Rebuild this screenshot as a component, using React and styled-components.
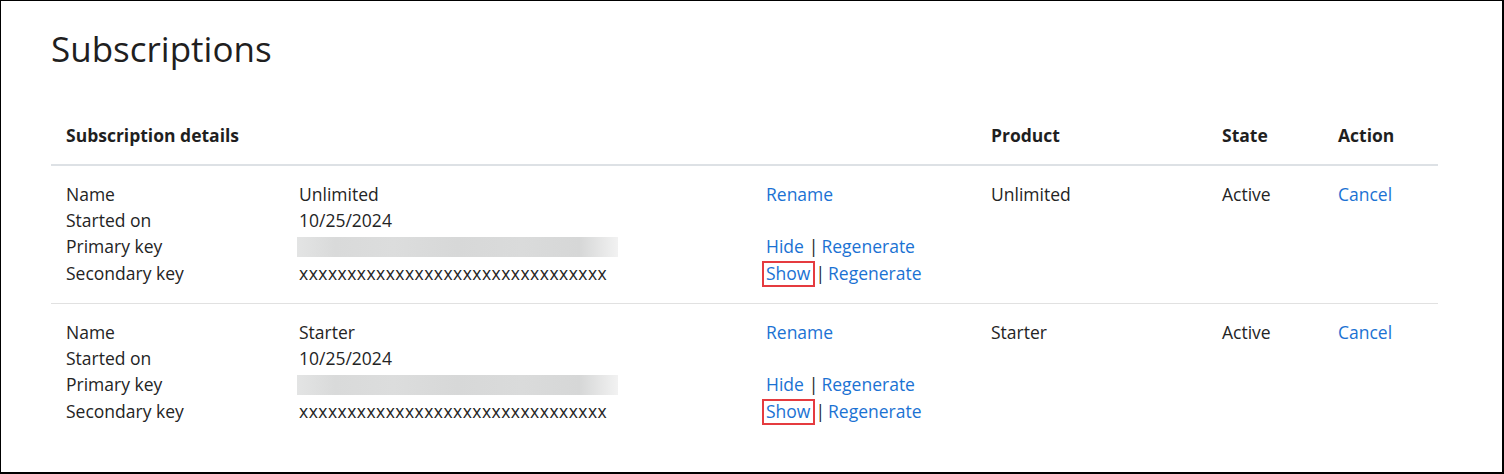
import React from "react";
import styled, { createGlobalStyle } from "styled-components";

const Global = createGlobalStyle`
  html, body { margin: 0; padding: 0; background: #fff; }
  body { font-family: "Open Sans", "Noto Sans", sans-serif; color: #242424; }
  * { box-sizing: border-box; }
`;

const Frame = styled.div`
  width: 1504px;
  height: 474px;
  border-left: 1px solid #000;
  border-top: 1px solid #000;
  border-right: 2px solid #000;
  border-bottom: 2px solid #000;
  padding: 20px 64px 0 50px;
  background: #fff;
`;

const Title = styled.h1`
  margin: 0;
  font-size: 35px;
  font-weight: 400;
  line-height: 56px;
  color: #1f1f1f;
`;

const Table = styled.div`
  margin-top: 29px;
  width: 1387px;
`;

const Row = styled.div`
  display: grid;
  grid-template-columns: 925px 231px 116px 115px;
  border-bottom: ${(p) => (p.$head ? "2px solid #dde1e5" : p.$last ? "none" : "1px solid #e1e1e1")};
  padding: ${(p) => (p.$head ? "16px 0 16px" : "15px 0 17px")};
`;

const HeadCell = styled.div`
  padding-left: 15px;
  font-size: 17.5px;
  font-weight: 700;
  line-height: 26px;
  color: #1f1f1f;
`;

const Cell = styled.div`
  padding-left: 15px;
  font-size: 17.5px;
  line-height: 26px;
`;

const Details = styled.div`
  padding-left: 15px;
  display: grid;
  grid-template-columns: 233px 467px 1fr;
  font-size: 17.5px;
  line-height: 26px;
`;

const Line = styled.div`
  height: ${(p) => (p.$tall ? "27px" : "26px")};
  padding-bottom: ${(p) => (p.$tall && !p.$top ? "1px" : "0")};
  white-space: nowrap;
  display: flex;
  align-items: ${(p) => (p.$top ? "flex-start" : "center")};
`;

const Link = styled.a`
  color: #1b72d3;
  text-decoration: none;
  cursor: pointer;
`;

const Pipe = styled.span`
  color: #242424;
  margin: ${(p) => (p.$wide ? "0 3px 0 5px" : "0 3px 0 5px")};
`;

const Boxed = styled.span`
  position: relative;
  margin-right: ${(p) => (p.$gap ? "0" : "0")};
  &::after {
    content: "";
    position: absolute;
    left: -4px;
    right: -5px;
    top: 1px;
    bottom: -1px;
    border: 2px solid #e53b3f;
  }
`;

const Masked = styled.div`
  width: 321px;
  height: 20px;
  margin-left: -2px;
  margin-top: 4px;
  background: linear-gradient(
    90deg,
    #e3e4e4 0%,
    #d9dada 12%,
    #dcdddd 30%,
    #d7d8d8 50%,
    #dadbdb 70%,
    #d6d7d7 88%,
    #f2f2f2 100%
  );
  filter: blur(0.6px);
`;

const Hidden = styled.span`
  letter-spacing: 0.47px;
`;

const subs = [
  { name: "Unlimited", date: "10/25/2024" },
  { name: "Starter", date: "10/25/2024" },
];

function SubRow({ s, last }) {
  return (
    <Row $last={last}>
      <Details>
        <div>
          <Line>Name</Line>
          <Line>Started on</Line>
          <Line $tall>Primary key</Line>
          <Line>Secondary key</Line>
        </div>
        <div>
          <Line>{s.name}</Line>
          <Line>{s.date}</Line>
          <Line $tall $top>
            <Masked />
          </Line>
          <Line>
            <Hidden>{"x".repeat(32)}</Hidden>
          </Line>
        </div>
        <div>
          <Line>
            <Link>Rename</Link>
          </Line>
          <Line />
          <Line $tall>
            <Link>Hide</Link>
            <Pipe>|</Pipe>
            <Link>Regenerate</Link>
          </Line>
          <Line>
            <Boxed>
              <Link>Show</Link>
            </Boxed>
            <Pipe $wide>|</Pipe>
            <Link>Regenerate</Link>
          </Line>
        </div>
      </Details>
      <Cell>{s.name}</Cell>
      <Cell>Active</Cell>
      <Cell>
        <Link>Cancel</Link>
      </Cell>
    </Row>
  );
}

export default function App() {
  return (
    <>
      <Global />
      <Frame>
        <Title>Subscriptions</Title>
        <Table>
          <Row $head>
            <HeadCell>Subscription details</HeadCell>
            <HeadCell>Product</HeadCell>
            <HeadCell>State</HeadCell>
            <HeadCell>Action</HeadCell>
          </Row>
          {subs.map((s, i) => (
            <SubRow key={i} s={s} last={i === subs.length - 1} />
          ))}
        </Table>
      </Frame>
    </>
  );
}
